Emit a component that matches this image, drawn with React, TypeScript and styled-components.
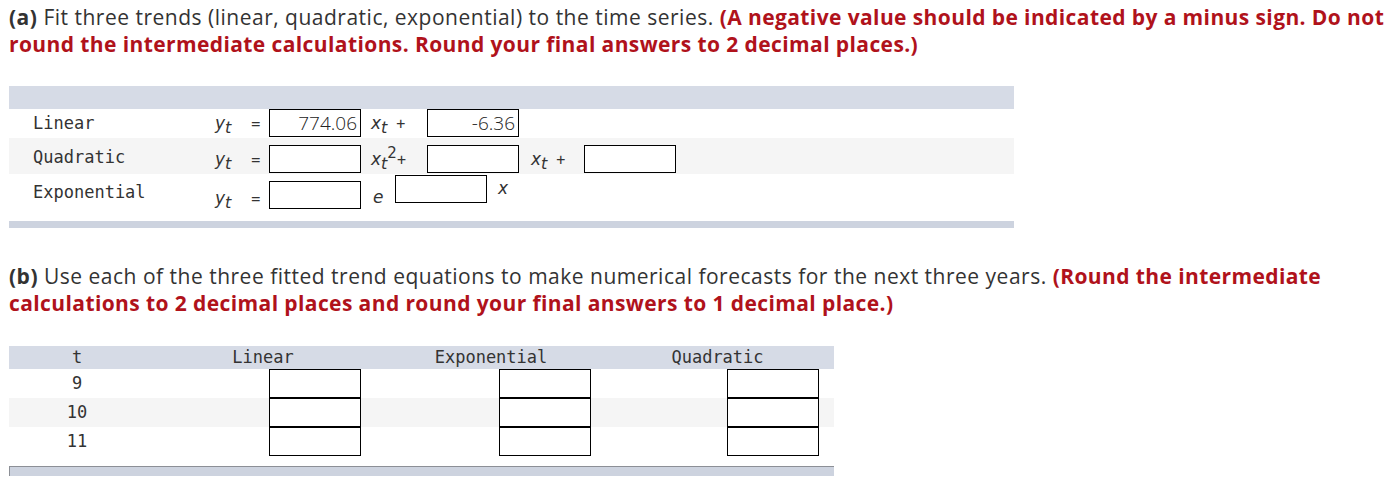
import styled, { createGlobalStyle } from 'styled-components';

const GlobalStyle = createGlobalStyle`
  body {
    margin: 0;
    background: #fff;
  }
`;

const Page = styled.div`
  width: 1400px;
  box-sizing: border-box;
  padding: 4px 9px 0;
  font-family: "Open Sans", "Liberation Sans", sans-serif;
  color: #333;
`;

const Prompt = styled.p<{ gap?: number }>`
  margin: ${p => p.gap ?? 0}px 0 0;
  font-size: 21px;
  line-height: 27px;
  letter-spacing: 0.5px;
`;

const PartLabel = styled.span`
  font-weight: 700;
`;

const Note = styled.span`
  font-weight: 700;
  color: #b0121b;
  letter-spacing: 0.4px;
`;

const Table = styled.div<{ width: number; gap: number }>`
  width: ${p => p.width}px;
  margin-top: ${p => p.gap}px;
  font-family: "DejaVu Sans Mono", "Liberation Mono", monospace;
  font-size: 17px;
  color: #333;
`;

const HeadBand = styled.div`
  height: 23px;
  background: #d6dbe6;
`;

const FootBand = styled.div<{ framed?: boolean }>`
  height: ${p => (p.framed ? 9 : 7)}px;
  background: #cdd3df;
  border-top: ${p => (p.framed ? '1px solid #8c8f96' : 'none')};
  border-left: ${p => (p.framed ? '1px solid #8c8f96' : 'none')};
  margin-top: ${p => (p.framed ? 10 : 0)}px;
`;

const EqRow = styled.div<{ h: number; pad: number; shaded?: boolean }>`
  display: flex;
  align-items: flex-start;
  height: ${p => p.h}px;
  box-sizing: border-box;
  padding-top: ${p => p.pad}px;
  background: ${p => (p.shaded ? '#f5f5f5' : '#fff')};
`;

const RowLabel = styled.div<{ dy?: number }>`
  width: 172px;
  padding-left: 24px;
  line-height: 28px;
  margin-top: ${p => p.dy ?? 0}px;
`;

const MathCell = styled.div<{ w: number; indent?: number; dy?: number }>`
  width: ${p => p.w}px;
  box-sizing: border-box;
  padding-left: ${p => p.indent ?? 10}px;
  line-height: 28px;
  margin-top: ${p => p.dy ?? 0}px;
  white-space: nowrap;
`;

const Var = styled.i`
  font-family: "DejaVu Sans", Verdana, sans-serif;
  font-size: 17px;
  font-style: italic;
  color: #333;
`;

const Sub = styled.sub`
  font-family: "DejaVu Sans", Verdana, sans-serif;
  font-style: italic;
  font-size: 16px;
  vertical-align: -4px;
  line-height: 0;
`;

const Sup = styled.sup`
  font-family: "DejaVu Sans", Verdana, sans-serif;
  font-size: 15px;
  vertical-align: 7px;
  line-height: 0;
`;

const Op = styled.span<{ space?: number }>`
  font-family: "DejaVu Sans Mono", monospace;
  font-size: 15px;
  margin-left: ${p => p.space ?? 9}px;
`;

const Answer = styled.div<{ dy?: number }>`
  width: 92px;
  height: 28px;
  box-sizing: border-box;
  border: 1px solid #000;
  background: #fff;
  margin-top: ${p => p.dy ?? 0}px;
  padding: 0 3px;
  text-align: right;
  font-family: "Open Sans", "Liberation Sans", sans-serif;
  font-weight: 300;
  font-size: 19px;
  line-height: 26px;
  color: #222;
`;

const ForecastHead = styled.div`
  display: grid;
  grid-template-columns: 136px 236px 220px 233px;
  height: 23px;
  line-height: 23px;
  background: #d6dbe6;
  text-align: center;
`;

const ForecastRow = styled.div<{ shaded?: boolean }>`
  display: grid;
  grid-template-columns: 136px 236px 220px 233px;
  height: 29px;
  background: ${p => (p.shaded ? '#f5f5f5' : '#fff')};
`;

const Period = styled.div`
  text-align: center;
  line-height: 29px;
`;

const Slot = styled.div<{ offset: number }>`
  padding-left: ${p => p.offset}px;
`;

const Box = styled.div`
  width: 92px;
  height: 29px;
  box-sizing: border-box;
  border: 1px solid #000;
  background: #fff;
`;

const Yt = () => (
  <>
    <Var>y</Var>
    <Sub>t</Sub>
    <Op space={20}>=</Op>
  </>
);

const offsets = [124, 118, 126];

export default function App() {
  return (
    <Page>
      <GlobalStyle />
      <Prompt>
        <PartLabel>(a)</PartLabel> Fit three trends (linear, quadratic, exponential) to the time series.{' '}
        <Note>
          (A negative value should be indicated by a minus sign. Do not round the intermediate calculations.
          Round your final answers to 2 decimal places.)
        </Note>
      </Prompt>

      <Table width={1005} gap={28}>
        <HeadBand />
        <EqRow h={29} pad={0}>
          <RowLabel>Linear</RowLabel>
          <MathCell w={64} indent={10}>
            <Yt />
          </MathCell>
          <Answer>774.06</Answer>
          <MathCell w={66}>
            <Var>x</Var>
            <Sub>t</Sub>
            <Op>+</Op>
          </MathCell>
          <Answer>-6.36</Answer>
        </EqRow>
        <EqRow h={36} pad={7} shaded>
          <RowLabel dy={-2}>Quadratic</RowLabel>
          <MathCell w={64} indent={10}>
            <Yt />
          </MathCell>
          <Answer />
          <MathCell w={66}>
            <Var>x</Var>
            <Sub>t</Sub>
            <Sup>2</Sup>
            <Op space={0}>+</Op>
          </MathCell>
          <Answer />
          <MathCell w={65} indent={12}>
            <Var>x</Var>
            <Sub>t</Sub>
            <Op>+</Op>
          </MathCell>
          <Answer />
        </EqRow>
        <EqRow h={47} pad={7}>
          <RowLabel dy={-3}>Exponential</RowLabel>
          <MathCell w={64} indent={10} dy={3}>
            <Yt />
          </MathCell>
          <Answer />
          <MathCell w={34} indent={12} dy={2}>
            <Var>e</Var>
          </MathCell>
          <Answer dy={-6} />
          <MathCell w={40} indent={11} dy={-7}>
            <Var>x</Var>
          </MathCell>
        </EqRow>
        <FootBand />
      </Table>

      <Prompt gap={35}>
        <PartLabel>(b)</PartLabel> Use each of the three fitted trend equations to make numerical forecasts for the
        next three years. <Note>(Round the intermediate calculations to 2 decimal places and round your final answers
        to 1 decimal place.)</Note>
      </Prompt>

      <Table width={825} gap={29}>
        <ForecastHead>
          <div>t</div>
          <div>Linear</div>
          <div>Exponential</div>
          <div>Quadratic</div>
        </ForecastHead>
        {[9, 10, 11].map((t, i) => (
          <ForecastRow key={t} shaded={i === 1}>
            <Period>{t}</Period>
            {offsets.map(o => (
              <Slot key={o} offset={o}>
                <Box />
              </Slot>
            ))}
          </ForecastRow>
        ))}
        <FootBand framed />
      </Table>
    </Page>
  );
}
